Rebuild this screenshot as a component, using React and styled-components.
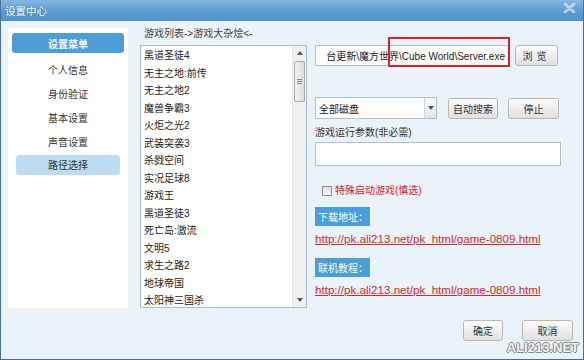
import React from 'react';
import styled, { createGlobalStyle } from 'styled-components';

const GlobalStyle = createGlobalStyle`
  html, body {
    margin: 0;
    padding: 0;
    background: #fff;
  }
  body {
    font-family: 'Liberation Sans', 'Noto Sans CJK SC', sans-serif;
    font-size: 10px;
    color: #2b2b2b;
  }
`;

const games = [
  '黑道圣徒4',
  '无主之地:前传',
  '无主之地2',
  '魔兽争霸3',
  '火炬之光2',
  '武装突袭3',
  '杀戮空间',
  '实况足球8',
  '游戏王',
  '黑道圣徒3',
  '死亡岛:激流',
  '文明5',
  '求生之路2',
  '地球帝国',
  '太阳神三国杀',
];

const menu = ['个人信息', '身份验证', '基本设置', '声音设置', '路径选择'];

const Window = styled.div`
  position: relative;
  box-sizing: border-box;
  width: 584px;
  height: 360px;
  display: flex;
  flex-direction: column;
  border: 1px solid #4a6f93;
  border-top: none;
  background: #eaf2fa;
  overflow: hidden;
`;

const TitleBar = styled.div`
  height: 21px;
  flex-shrink: 0;
  display: flex;
  align-items: center;
  justify-content: space-between;
  padding: 0 8px 0 4px;
  background: linear-gradient(#84b8e2, #5b9ad0 60%, #5293cb);
  color: #fff;
  font-size: 10.5px;
  text-shadow: 0 0 2px #3c6f9d;
`;

const Close = styled.div`
  display: flex;
  align-items: center;
  margin-top: -6px;
`;

const Body = styled.div`
  flex: 1;
  display: flex;
  flex-direction: column;
  padding: 7px 10px 0 7px;
`;

const Main = styled.div`
  display: flex;
  height: 280px;
`;

const SideMenu = styled.div`
  box-sizing: border-box;
  width: 120px;
  padding: 5px 4px;
  background: #fff;
  display: flex;
  flex-direction: column;
  gap: 3.75px;
`;

const MenuHead = styled.div`
  height: 20px;
  margin-bottom: 3px;
  border-radius: 3px;
  background: #4c9ed6;
  color: #fff;
  font-weight: bold;
  display: flex;
  align-items: center;
  justify-content: center;
`;

const MenuItem = styled.div`
  height: 20px;
  margin: 0 4px;
  border-radius: 3px;
  background: ${(p) => (p.$active ? '#bcdcf2' : 'transparent')};
  color: #333;
  display: flex;
  align-items: center;
  justify-content: center;
`;

const ListColumn = styled.div`
  width: 167px;
  margin-left: 12px;
  display: flex;
  flex-direction: column;
`;

const Caption = styled.div`
  line-height: 12px;
  margin-bottom: 5px;
  padding-left: 4px;
  color: #444;
`;

const ListBox = styled.div`
  box-sizing: border-box;
  height: 263px;
  display: flex;
  background: #fff;
  border: 1px solid #a7bdd2;
`;

const Items = styled.div`
  flex: 1;
  padding: 1px 0 0 3px;
  overflow: hidden;
`;

const Item = styled.div`
  line-height: 17.5px;
  white-space: nowrap;
  color: #222;
`;

const Scroll = styled.div`
  width: 13px;
  display: flex;
  flex-direction: column;
  align-items: center;
  background: #f0f0f0;
  border-left: 1px solid #e6e6e6;
`;

const Arrow = styled.div`
  height: 14px;
  display: flex;
  align-items: center;
  justify-content: center;
`;

const Thumb = styled.div`
  box-sizing: border-box;
  width: 11px;
  height: 41px;
  margin-top: 1px;
  border: 1px solid #a9a9a9;
  border-radius: 2px;
  background: linear-gradient(to right, #f3f3f3, #dcdcdc);
  display: flex;
  flex-direction: column;
  align-items: center;
  justify-content: center;
  gap: 1px;
  span {
    width: 5px;
    height: 1px;
    background: #888;
  }
`;

const Track = styled.div`
  flex: 1;
`;

const Settings = styled.div`
  flex: 1;
  margin-left: 8px;
  display: flex;
  flex-direction: column;
`;

const Row = styled.div`
  position: relative;
  display: flex;
  align-items: center;
  margin-top: ${(p) => p.$top || 0}px;
`;

const Field = styled.div`
  box-sizing: border-box;
  width: ${(p) => p.$w}px;
  height: ${(p) => p.$h || 22}px;
  background: #fff;
  border: 1px solid #a9c0d6;
  display: flex;
  align-items: center;
  justify-content: ${(p) => (p.$end ? 'flex-end' : 'flex-start')};
  padding: 0 3px;
  white-space: nowrap;
  overflow: hidden;
  color: #222;
`;

const Highlight = styled.div`
  position: absolute;
  left: 73px;
  width: 122px;
  top: -8px;
  bottom: -1px;
  box-sizing: border-box;
  border: 2px solid #d9202e;
`;

const Button = styled.div`
  box-sizing: border-box;
  width: ${(p) => p.$w}px;
  height: 21px;
  margin-left: ${(p) => p.$ml || 0}px;
  border: 1px solid #b8b8b8;
  border-radius: 3px;
  background: linear-gradient(#fdfdfd, #ececec 55%, #e0e0e0);
  display: flex;
  align-items: center;
  justify-content: center;
  color: #333;
  white-space: nowrap;
  letter-spacing: ${(p) => p.$ls || 0}px;
`;

const Select = styled(Field)`
  padding-right: 0;
  justify-content: space-between;
`;

const DropArrow = styled.div`
  box-sizing: border-box;
  width: 12px;
  height: 100%;
  border-left: 1px solid #c9d6e3;
  background: linear-gradient(#fafafa, #e4e4e4);
  display: flex;
  align-items: center;
  justify-content: center;
`;

const Label = styled.div`
  margin-top: ${(p) => p.$top || 0}px;
  line-height: 14px;
  color: #333;
`;

const Check = styled.div`
  box-sizing: border-box;
  width: 10px;
  height: 10px;
  margin: 0 3px 0 7px;
  border: 1px solid #8f8f8f;
  background: linear-gradient(#dedede, #fafafa);
`;

const Danger = styled.span`
  color: #d51d1d;
  line-height: 14px;
`;

const Tag = styled.div`
  width: 55px;
  height: 19px;
  margin-top: ${(p) => p.$top}px;
  background: #4c9ed6;
  color: #fff;
  display: flex;
  align-items: center;
  padding-left: 3px;
  box-sizing: border-box;
  white-space: nowrap;
  overflow: hidden;
`;

const Link = styled.a`
  display: block;
  margin-top: 6px;
  line-height: 14px;
  color: #d42a2a;
  text-decoration: underline;
  font-size: 11.6px;
`;

const Footer = styled.div`
  display: flex;
  justify-content: flex-end;
  margin-top: 12px;
`;

const Watermark = styled.div`
  position: absolute;
  right: 4px;
  bottom: 4px;
  font: bold 13px 'Liberation Sans', sans-serif;
  color: #f4f4f4;
  text-shadow: 1px 0 #888, -1px 0 #888, 0 1px #888, 0 -1px #888;
`;

const Tri = ({ up }) => (
  <svg width="6" height="4" viewBox="0 0 6 4">
    <path d={up ? 'M0 4 L3 0 L6 4 Z' : 'M0 0 L6 0 L3 4 Z'} fill="#555" />
  </svg>
);

const App = () => (
  <>
    <GlobalStyle />
    <Window>
      <TitleBar>
        <span>设置中心</span>
        <Close>
          <svg width="11" height="10" viewBox="0 0 11 10">
            <path
              d="M1 1 L10 9 M10 1 L1 9"
              stroke="#d4e6f5"
              strokeWidth="2.4"
              strokeLinecap="round"
            />
            <path d="M1 1 L10 9 M10 1 L1 9" stroke="#8fb7d9" strokeWidth="0.8" />
          </svg>
        </Close>
      </TitleBar>
      <Body>
        <Main>
          <SideMenu>
            <MenuHead>设置菜单</MenuHead>
            {menu.map((m) => (
              <MenuItem key={m} $active={m === '路径选择'}>
                {m}
              </MenuItem>
            ))}
          </SideMenu>
          <ListColumn>
            <Caption>游戏列表-&gt;游戏大杂烩&lt;-</Caption>
            <ListBox>
              <Items>
                {games.map((g, i) => (
                  <Item key={i}>{g}</Item>
                ))}
              </Items>
              <Scroll>
                <Arrow>
                  <Tri up />
                </Arrow>
                <Thumb>
                  <span />
                  <span />
                  <span />
                </Thumb>
                <Track />
                <Arrow>
                  <Tri />
                </Arrow>
              </Scroll>
            </ListBox>
          </ListColumn>
          <Settings>
            <Row $top={17}>
              <Field $w={194} $h={21} $end>
                台更新\魔方世界\Cube World\Server.exe
              </Field>
              <Highlight />
              <Button $w={43} $ml={6} $ls={4}>
                浏览
              </Button>
            </Row>
            <Row $top={31}>
              <Select $w={122}>
                全部磁盘
                <DropArrow>
                  <Tri />
                </DropArrow>
              </Select>
              <Button $w={50} $ml={11}>
                自动搜索
              </Button>
              <Button $w={51} $ml={10}>
                停止
              </Button>
            </Row>
            <Label $top={7}>游戏运行参数(非必需)</Label>
            <Row $top={2}>
              <Field $w={246} $h={24} />
            </Row>
            <Row $top={18}>
              <Check />
              <Danger>特殊启动游戏(慎选)</Danger>
            </Row>
            <Tag $top={9}>下载地址：</Tag>
            <Link>http://pk.ali213.net/pk_html/game-0809.html</Link>
            <Tag $top={12}>联机教程：</Tag>
            <Link>http://pk.ali213.net/pk_html/game-0809.html</Link>
          </Settings>
        </Main>
        <Footer>
          <Button $w={40}>确定</Button>
          <Button $w={51} $ml={19}>
            取消
          </Button>
        </Footer>
      </Body>
      <Watermark>ALI213.NET</Watermark>
    </Window>
  </>
);

export default App;
